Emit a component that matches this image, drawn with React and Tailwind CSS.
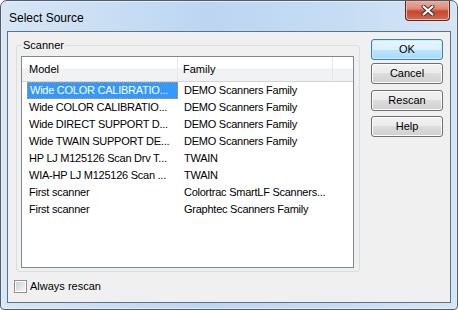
import React from 'react';

const rows = [
  ['Wide COLOR CALIBRATIO...', 'DEMO Scanners Family'],
  ['Wide COLOR CALIBRATIO...', 'DEMO Scanners Family'],
  ['Wide DIRECT SUPPORT D...', 'DEMO Scanners Family'],
  ['Wide TWAIN SUPPORT DE...', 'DEMO Scanners Family'],
  ['HP LJ M125126 Scan Drv T...', 'TWAIN'],
  ['WIA-HP LJ M125126 Scan ...', 'TWAIN'],
  ['First scanner', 'Colortrac SmartLF Scanners...'],
  ['First scanner', 'Graphtec Scanners Family'],
];

const font = { fontFamily: '"Liberation Sans", Arial, sans-serif' };

function WinButton({ children, focused, className = '' }) {
  return (
    <button
      className={
        'w-[72px] h-[21px] rounded-[3px] border text-[11px] leading-none text-black flex items-center justify-center ' +
        (focused
          ? 'border-[#3c7fb1] bg-[linear-gradient(#eaf6fd_0%,#d9f0fc_50%,#bee6fd_50%,#a7d9f5_100%)] shadow-[inset_0_0_0_1px_#c9ecfd] '
          : 'border-[#707070] bg-[linear-gradient(#f2f2f2_0%,#ebebeb_50%,#dddddd_50%,#cfcfcf_100%)] shadow-[inset_0_0_0_1px_#fcfcfc] ') +
        className
      }
    >
      {children}
    </button>
  );
}

export default function App() {
  return (
    <div className="w-[458px] h-[310px] bg-white" style={font}>
      <div className="w-full h-full flex flex-col border border-[#4f5d6e] rounded-t-[7px] rounded-b-[4px] px-[6px] pb-[6px] bg-[linear-gradient(90deg,#d8e6f5_0%,#bcd6f2_45%,#c4dbf3_70%,#d6e5f5_100%)] shadow-[inset_0_0_0_1px_#e4eefa]">
        <div className="h-[30px] flex items-start justify-between">
          <div className="pt-[9px] pl-[2px] text-[12px] leading-[16px] text-black">Select Source</div>
          <div className="mr-[1px] w-[45px] h-[20px] border border-t-0 border-[#5b2a22] rounded-b-[4px] flex items-center justify-center bg-[linear-gradient(#e9ab9d_0%,#dd8c79_40%,#c8472f_55%,#cf6a51_100%)] shadow-[inset_0_0_0_1px_#eeb4a8]">
            <svg width="14" height="11" viewBox="0 0 14 11">
              <path d="M2.5 1.5 L11.5 9.5 M11.5 1.5 L2.5 9.5" stroke="#3b2b2b" strokeWidth="4" strokeLinecap="round" />
              <path d="M2.5 1.5 L11.5 9.5 M11.5 1.5 L2.5 9.5" stroke="#ffffff" strokeWidth="2.2" strokeLinecap="round" />
            </svg>
          </div>
        </div>

        <div className="flex-1 border border-[#5e7185] bg-[#f0f0f0] flex pl-[6px] pr-[7px] pt-[7px]">
          <div className="w-[346px] flex flex-col">
            <fieldset className="ml-[2px] w-[344px] h-[233px] border border-[#d5dfe5] rounded-[3px] pl-[4px] pr-[5px] pt-[4px]">
              <legend className="ml-[1px] px-[1px] text-[11px] leading-[13px] text-black">Scanner</legend>
              <div className="w-[333px] h-[212px] border border-[#828790] bg-white flex flex-col">
                <div className="h-[25px] flex border-b border-[#d5d5d5] bg-[linear-gradient(#ffffff_0%,#ffffff_45%,#f1f2f4_50%,#f1f2f4_100%)] text-[11px] text-black">
                  <div className="w-[156px] pl-[7px] flex items-center border-r border-[#e3e8ee]">Model</div>
                  <div className="w-[155px] pl-[5px] flex items-center border-r border-[#e3e8ee]">Family</div>
                  <div className="flex-1" />
                </div>
                {rows.map(([model, family], i) => (
                  <div key={i} className="h-[17px] flex text-[11px] tracking-[-0.25px] text-black whitespace-nowrap">
                    <div className="w-[156px] pl-[5px]">
                      <div
                        className={
                          'h-[17px] flex items-center pl-[2px] overflow-hidden ' +
                          (i === 0 ? 'bg-[#3399ff] text-white border border-dotted border-[#e2963c] pl-[1px]' : '')
                        }
                      >
                        {model}
                      </div>
                    </div>
                    <div className="flex-1 pl-[6px] flex items-center overflow-hidden">{family}</div>
                  </div>
                ))}
              </div>
            </fieldset>
            <div className="mt-[8px] flex items-center h-[13px]">
              <div className="w-[13px] h-[13px] border border-[#8e8f8f] bg-white p-[1px]">
                <div className="w-full h-full bg-[linear-gradient(135deg,#cbcfd5_0%,#e6e6e6_60%,#f6f6f6_100%)]" />
              </div>
              <span className="ml-[3px] text-[11px] text-black">Always rescan</span>
            </div>
          </div>

          <div className="ml-[11px] flex flex-col">
            <WinButton focused>OK</WinButton>
            <WinButton className="mt-[3px]">Cancel</WinButton>
            <WinButton className="mt-[6px]">Rescan</WinButton>
            <WinButton className="mt-[5px]">Help</WinButton>
          </div>
        </div>
      </div>
    </div>
  );
}
